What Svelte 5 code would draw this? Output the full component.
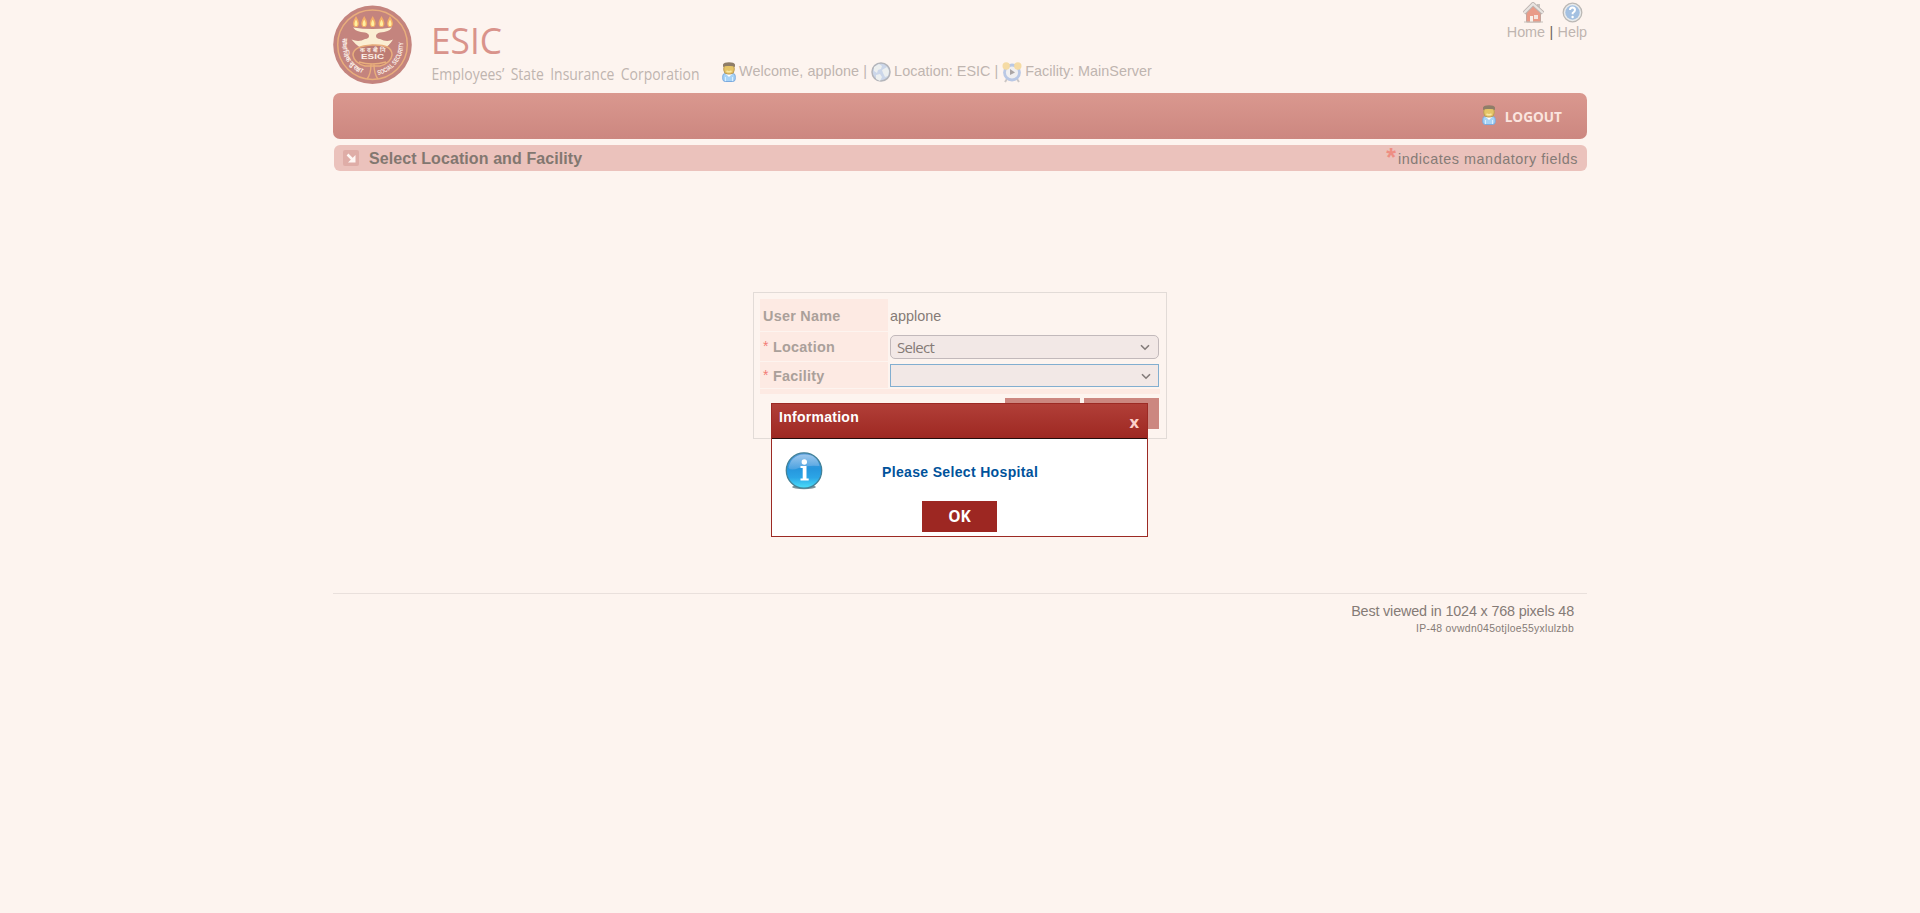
<script>
  const user = 'applone';
  const flames = [23, 31.2, 39.7, 48.5, 57];
  const rows = [
    { label: 'User Name', required: false, kind: 'text', value: user },
    { label: 'Location', required: true, kind: 'select', value: 'Select' },
    { label: 'Facility', required: true, kind: 'focus', value: '' }
  ];
</script>

{#snippet person()}
  <svg class="person" width="14" height="20" viewBox="0 0 14 20">
    <rect x=".8" y="11.5" width="12.4" height="8" rx="2.5" fill="#a8d3f6" stroke="#7baade" />
    <path d="M4 12l3 3 3-3z" fill="#fff" />
    <path d="M3.5 15v4M10.500 15v4" stroke="#d9efff" />
    <rect x="1.800" y="2" width="10.400" height="10" rx="4" fill="#e5c467" stroke="#bd9c56" />
    <path d="M1 5V2.500Q2 .3 7 .3t6 2.200V5Q11 3.600 7 4 3 3.600 1 5z" fill="#8e7d68" />
    <path d="M4.500 9q2.500 1.500 5 0" stroke="#f9e6a1" stroke-width="1.500" fill="none" />
  </svg>
{/snippet}

<div class="page">
  <header>
    <svg class="emblem" width="79" height="80" viewBox="0 0 79 80">
      <defs>
        <path id="arcLeft" d="M10.500 33A30 30 0 0 0 35 70" />
        <path id="arcRight" d="M45 70A32 32 0 0 0 70 34" />
      </defs>
      <circle cx="39.500" cy="39.700" r="39.300" fill="#c4847e" />
      <circle cx="39.500" cy="39.700" r="34.800" fill="none" stroke="#e9ae7c" stroke-width="1.500" />
      {#each flames as x}
        <path d="M{x} 11q5 8 1.500 11h-3q-3.500-3 1.500-11z" fill="#f3ae68" />
        <path d="M{x} 14.500q2.500 4 1 6.500h-2q-1.500-2.500 1-6.500z" fill="#fff0a0" />
      {/each}
      <path d="M20 22.500Q39.500 25.500 59 22.500 56 27 47 27.500 43 28.500 43 31T47 34Q54 37.500 60 34.500 56 41 52 42.500 39.500 37 27 42.500 22 39 18.500 34.500 26 37.500 32 34 36 33.500 36 31T32 27.500Q23 27 20 22.500z" fill="#fbeed3" />
      <path d="M20 50Q20 41 39.500 40T59 50q-1 8-12 11H32Q21 58 20 50z" fill="#bd7c73" stroke="#e9ae7c" stroke-width="1.500" />
      <path d="M26 57q13 4 27 0M38 59q0 10-4 15M41 59q0 10 4 15" fill="none" stroke="#e9ae7c" stroke-width="1.400" />
      <text class="mark" x="27" y="47" font-size="6" textLength="25" lengthAdjust="spacingAndGlyphs">क रा बी नि</text>
      <text class="mark" x="28" y="54" font-size="7" textLength="23" lengthAdjust="spacingAndGlyphs">ESIC</text>
      <text class="mark" font-size="6.500"><textPath href="#arcLeft" textLength="43">सामाजिक सुरक्षा</textPath></text>
      <text class="mark" font-size="6.500"><textPath href="#arcRight" textLength="45" lengthAdjust="spacingAndGlyphs">SOCIAL SECURITY</textPath></text>
    </svg>
    <svg class="wordmark" width="275" height="65" viewBox="0 0 275 65">
      <text x="-2" y="35" font-size="37" fill="#d9938b" textLength="71" lengthAdjust="spacingAndGlyphs">ESIC</text>
      <text x="-1.500" y="61" font-size="15.500" fill="#bfb5b0" textLength="268" lengthAdjust="spacingAndGlyphs" word-spacing="3">Employees’ State Insurance Corporation</text>
    </svg>
    <div class="status">
      {@render person()}
      <span class="welcome">Welcome, {user} |</span>
      <svg width="20" height="20" viewBox="0 0 20 20">
        <circle cx="10" cy="10" r="9" fill="#cbd6e9" stroke="#b4b5ba" stroke-width="1.500" />
        <path d="M3 5l5-3 3 2-1 3-3 1-1 3-3-2zM11 8l5-3 2 4-1 5-3 1-2-4zM5 13l4-1 2 3-2 4-4-2z" fill="#ecefef" />
      </svg>
      <span class="place">Location: ESIC |</span>
      <svg width="20" height="21" viewBox="0 0 20 21">
        <path d="M5 17l-2 3M15 17l2 3" stroke="#ccc7c5" stroke-width="2" />
        <circle cx="10" cy="10.500" r="7.500" fill="#f0eff0" stroke="#b9c8e5" stroke-width="2.800" />
        <circle cx="4.200" cy="4" r="3.700" fill="#f5dba4" /><circle cx="15.800" cy="4" r="3.700" fill="#f5dba4" />
        <path d="M8 7l5 3.500L8 13z" fill="#aaa5a5" />
      </svg>
      <span class="facility">Facility: MainServer</span>
    </div>
    <nav>
      <div class="icons">
        <svg width="21" height="21" viewBox="0 0 21 21">
          <path d="M14 2h3v6h-3z" fill="#c8c2bf" />
          <path d="M3.500 10L10 4l7.500 6v10h-14z" fill="#e99b88" stroke="#c5a59d" />
          <path d="M1 11L10 2l10 9" fill="none" stroke="#bdb4b1" stroke-width="4" />
          <path d="M1 11L10 2l10 9" fill="none" stroke="#e8e4e1" stroke-width="2.200" />
          <path d="M7 14h3v6H7z" fill="#f8f0e9" /><path d="M11 13h4v4h-4z" fill="#f5e4dd" />
          <path d="M1 20h19" stroke="#c4bfba" />
        </svg>
        <svg width="21" height="21" viewBox="0 0 21 21">
          <circle cx="10.500" cy="10.500" r="9.300" fill="#e9ebec" stroke="#bbb8b5" stroke-width="1.300" />
          <circle cx="10.500" cy="10.500" r="7.200" fill="#a3c0e1" />
          <path d="M8 8q0-2.500 2.500-2.500T13 8q0 1.500-2.300 3v1.300" fill="none" stroke="#fff" stroke-width="2" /><circle cx="10.600" cy="15" r="1.200" fill="#fff" />
        </svg>
      </div>
      <div class="links"><span>Home</span> <b>|</b> <span>Help</span></div>
    </nav>
  </header>

  <div class="menu">{@render person()}<span>LOGOUT</span></div>

  <div class="title">
    <svg width="16" height="16" viewBox="0 0 16 16">
      <rect width="16" height="16" rx="2" fill="#dfada7" />
      <path d="M4.500 4.500L10 10" stroke="#fff6f3" stroke-width="2.500" /><path d="M12.500 5v7.500H5z" fill="#fff6f3" />
    </svg>
    <h1>Select Location and Facility</h1>
    <span class="star">*</span><span class="mandatory">indicates mandatory fields</span>
  </div>

  <main>
    <form>
      {#each rows as row}
        <div class="row {row.kind}">
          <label for={row.label}>{#if row.required}<i>*</i>{/if}<span>{row.label}</span></label>
          <div class="field" id={row.label}>
            <span>{row.value}</span>
            {#if row.kind !== 'text'}
              <svg width="10" height="7" viewBox="0 0 10 7"><path d="M1 1.200L5 5.200L9 1.200" fill="none" stroke="#837b79" stroke-width="1.600" /></svg>
            {/if}
          </div>
        </div>
      {/each}
      <div class="strip"></div>
      <div class="actions"><span></span><span></span></div>
    </form>
  </main>

  <footer>
    <div class="best">Best viewed in 1024 x 768 pixels 48</div>
    <div class="ip">IP-48 ovwdn045otjloe55yxlulzbb</div>
  </footer>
</div>

<section class="dialog">
  <div class="bar"><strong>Information</strong><span>x</span></div>
  <div class="message">
    <svg width="38" height="38" viewBox="0 0 38 38">
      <defs>
        <linearGradient id="ball" x2="0" y2="1"><stop stop-color="#5b9cdc" /><stop offset=".45" stop-color="#2696dd" /><stop offset=".7" stop-color="#2ba5e6" /><stop offset="1" stop-color="#4be0fa" /></linearGradient>
        <linearGradient id="shine" x2="0" y2="1"><stop stop-color="#c3def5" /><stop offset="1" stop-color="#5fa8e2" /></linearGradient>
      </defs>
      <ellipse cx="19" cy="35" rx="12" ry="2.200" fill="#7b9299" />
      <circle cx="19" cy="18.500" r="17.700" fill="url(#ball)" stroke="#438197" stroke-width="1.300" />
      <path d="M3.500 16Q6 3 19 2.500T34.500 14Q22 13 14 16T3.500 16z" fill="url(#shine)" opacity=".65" />
      <circle cx="19.300" cy="10" r="2.700" fill="#fff" />
      <path d="M15.500 14h6v12.500h2.200V28.500h-8.200v-2h2.200V16h-2.200z" fill="#fff" />
    </svg>
    <strong>Please Select Hospital</strong>
  </div>
  <button>OK</button>
</section>

<style>
  :global(body) { background: #fdf4ef; font-family: "Liberation Sans", Arial, sans-serif; }
  .page { width: 1254px; margin: 0 auto; color: #857b76; }
  svg { display: block; flex: none; }
  header { height: 93px; display: flex; align-items: flex-start; white-space: nowrap; }
  .emblem { margin-top: 5px; }
  .mark { fill: #fbeee6; font-family: "Liberation Sans", sans-serif; font-weight: bold; }
  .wordmark { margin: 19px 0 0 21px; font-family: "Open Sans", "Noto Sans", sans-serif; overflow: visible; }
  .status { display: flex; align-items: center; height: 20px; margin: 62px 0 0 14px; color: #bfb5b0; font-size: 14.400px; line-height: 18px; }
  .welcome { margin: -2px 4px 0 3px; letter-spacing: .08px; }
  .place { margin: -2px 4px 0 3px; letter-spacing: .03px; }
  .facility { margin: -2px 0 0 3px; }
  nav { margin-left: auto; padding-top: 2px; font-size: 14.400px; text-align: right; }
  .icons { display: flex; justify-content: flex-end; gap: 18px; padding-right: 4px; }
  .links { line-height: 18px; color: #bfb5b0; letter-spacing: -.05px; }
  .links b { color: #6d6460; font-weight: normal; margin: 0 .5px; }
  .menu { height: 46px; box-sizing: border-box; border-radius: 7px; background: linear-gradient(#da988f, #cc8780); display: flex; justify-content: flex-end; padding: 13px 25px 0 0; color: #fbe5df; font: bold 13.600px/21px "Open Sans", sans-serif; }
  .menu .person { margin-top: -1px; }
  .menu span { margin-left: 9px; }
  .title { margin: 6px 0 0 1px; height: 26px; border-radius: 6px; background: #ebc2bc; display: flex; align-items: center; }
  .title svg { margin: 0 10px 0 9px; }
  h1 { margin: 1px 0 0; flex: 1; font-size: 16px; line-height: 26px; color: #827770; letter-spacing: .09px; }
  .star { font-size: 25px; font-weight: bold; line-height: 26px; color: #ee8e83; margin: -2px 2px 0 0; }
  .mandatory { font-size: 14.400px; letter-spacing: .52px; margin: 1px 9px 0 0; }
  main { padding-top: 121px; height: 301px; }
  form { width: 414px; height: 147px; box-sizing: border-box; margin: 0 auto; border: 1px solid #e2dbd7; padding: 6px 6px 0; }
  .row { display: grid; grid-template-columns: 128px 269px; column-gap: 2px; margin-bottom: 1px; height: 29px; }
  .row.text { height: 32px; }
  .row.text span, .focus label span { padding-top: 2px; }
  .row.focus { height: 26px; }
  label { background: #fdeae3; display: flex; align-items: center; padding-left: 3px; font-weight: bold; font-size: 14.400px; color: #aaa09a; letter-spacing: .25px; }
  label i { font: 14px/16px "Liberation Sans", sans-serif; color: #f37c76; width: 10px; margin-top: -1px; }
  .field { display: flex; align-items: center; justify-content: space-between; box-sizing: border-box; font-size: 14.400px; }
  .select .field { margin-top: 3px; height: 24px; border: 1px solid #c2b9bb; border-radius: 5px; background: #f2e8e6; padding: 0 8px 0 6px; font-family: "Open Sans", sans-serif; font-size: 15px; letter-spacing: -.7px; }
  .focus .field { margin-top: 2px; height: 23px; border: 1px solid #82aed0; background: #f2e8e6; padding: 1px 7px 0 6px; }
  .strip { height: 5px; background: #fdeae3; }
  .actions { display: flex; justify-content: flex-end; gap: 4px; padding: 4px 1px 0 0; }
  .actions span { width: 75px; height: 31px; background: #cc8780; }
  footer { border-top: 1px solid #e9e0dc; padding: 8px 13px 0 0; text-align: right; }
  .best { font-size: 14.400px; line-height: 18px; letter-spacing: -.17px; }
  .ip { font-size: 10.400px; line-height: 17px; letter-spacing: .3px; }
  .dialog { position: absolute; left: 771px; top: 403px; width: 377px; height: 134px; box-sizing: border-box; border: 1px solid #9c2a24; background: #fff; }
  .bar { height: 35px; box-sizing: border-box; border-bottom: 1px solid #250d0c; background: linear-gradient(#b13f38, #9e2822); color: #fff; display: flex; justify-content: space-between; padding: 0 8px 0 7px; font-size: 14px; }
  .bar strong { line-height: 27px; letter-spacing: .27px; }
  .bar span { font: bold 16.500px/35px "Open Sans", sans-serif; color: #fcd0ca; }
  .message { display: flex; height: 62px; padding-left: 13px; box-sizing: border-box; color: #00529b; font-size: 14px; }
  .message svg { margin-top: 13px; }
  .message strong { margin: 24px 0 0 59px; line-height: 18px; letter-spacing: .34px; }
  button { display: block; width: 75px; height: 31px; margin: 0 auto; padding: 0; border: 0; background: #9d2722; color: #fff; font: bold 15.500px/31px "Open Sans", sans-serif; }
</style>
